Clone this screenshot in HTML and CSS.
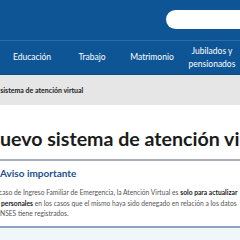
FILE: index.html
```html
<!DOCTYPE html>
<html lang="es">
<head>
    <meta charset="UTF-8">
    <meta name="viewport" content="width=device-width, initial-scale=1.0">
    <title>Nuevo sistema de atención virtual</title>
    <link rel="stylesheet" href="styles.css">
</head>
<body>
    <header class="top-bar">
        <input type="text" class="search" aria-label="Buscar">
    </header>
    <nav class="main-nav">
        <a href="#" class="nav-item">Educación</a>
        <a href="#" class="nav-item">Trabajo</a>
        <a href="#" class="nav-item">Matrimonio</a>
        <a href="#" class="nav-item">Jubilados y pensionados</a>
    </nav>
    <div class="breadcrumb">
        <span class="crumb">Nuevo sistema de atención virtual</span>
    </div>
    <main class="content">
        <h1 class="page-title">Nuevo sistema de atención virtual</h1>
        <section class="notice">
            <h2 class="notice-title">Aviso importante</h2>
            <p class="notice-text">En el caso de Ingreso Familiar de Emergencia, la Atención Virtual es <strong>solo para actualizar datos personales</strong> en los casos que el mismo haya sido denegado en relación a los datos que ANSES tiene registrados.</p>
        </section>
        <div class="next-box"></div>
    </main>
</body>
</html>
```

FILE: styles.css
```css
body {
    margin: 0;
    font-family: Lato, "Open Sans", Arial, sans-serif;
    overflow: hidden;
}
.top-bar {
    height: 40px;
    background-color: #0e5596;
    display: flex;
    justify-content: flex-end;
    align-items: center;
}
.search {
    width: 90px;
    height: 19px;
    margin-right: -16px;
    margin-top: -1px;
    border: none;
    border-radius: 10px;
    background-color: #fff;
    padding: 0;
}
.main-nav {
    height: 33px;
    background-color: #0e5596;
    border-top: 1px solid #2e6ca6;
    border-bottom: 1px solid #0a4a85;
    display: flex;
    padding-left: 2px;
}
.nav-item {
    flex: 0 0 60px;
    display: flex;
    align-items: center;
    justify-content: center;
    text-align: center;
    color: #fff;
    text-decoration: none;
    font-size: 8.5px;
    line-height: 13px;
}
.breadcrumb {
    height: 30px;
    background-color: #e6e6e6;
    display: flex;
    align-items: center;
    margin-left: -22px;
    font-size: 7px;
    font-weight: 700;
    color: #222;
}
.content {
    margin-left: -15px;
}
.page-title {
    margin: 22px 0 0 0;
    font-size: 19.6px;
    font-weight: 700;
    line-height: 24px;
    color: #1b1b1b;
    white-space: nowrap;
    padding-bottom: 8px;
    border-bottom: 2px solid #a6afbb;
}
.notice {
    padding: 5px 0 7px 15px;
    border-bottom: 2px solid #8aa4c2;
}
.notice-title {
    margin: 0;
    font-size: 10px;
    font-weight: 700;
    line-height: 14px;
    color: #1d4f8c;
}
.notice-text {
    margin: 7px 0 0 -17px;
    width: 260px;
    font-size: 6.7px;
    line-height: 10.5px;
    color: #555;
}
.notice-text strong {
    color: #222;
}
.next-box {
    height: 20px;
    background-color: #f1f6fb;
}
```
